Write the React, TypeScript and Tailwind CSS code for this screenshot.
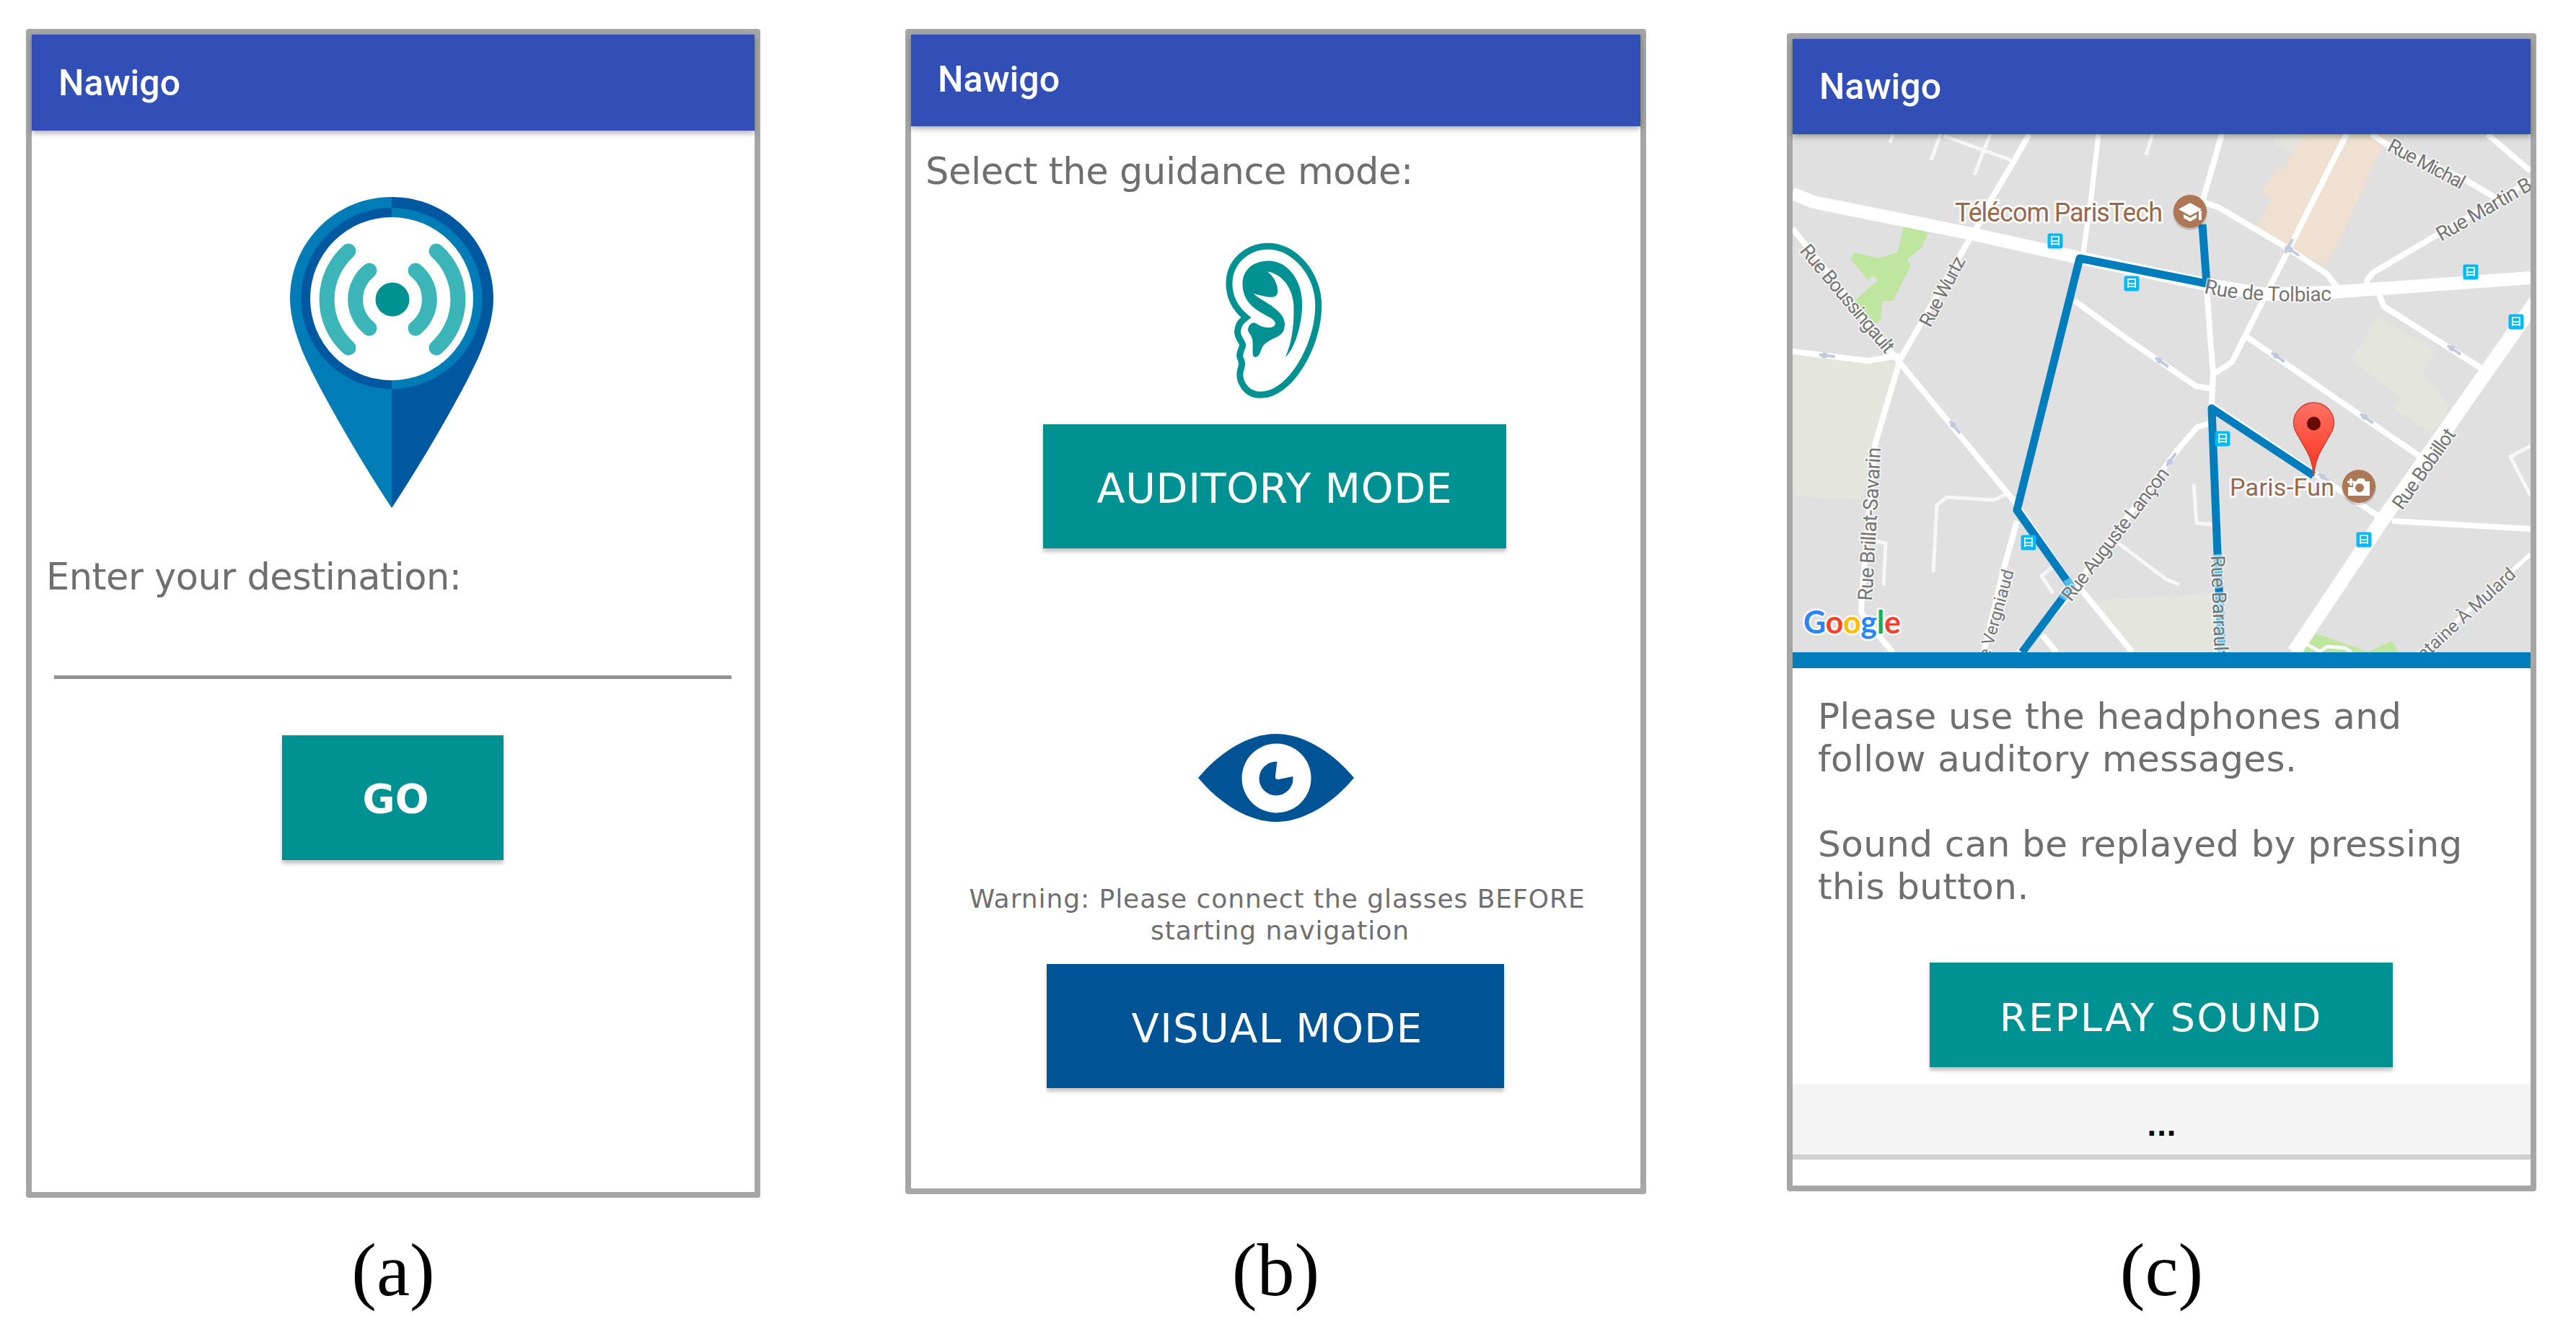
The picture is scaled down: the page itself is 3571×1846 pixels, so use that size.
import React, { ReactNode } from 'react';

interface PhoneProps {
    frameClass: string;
    headerClass: string;
    caption: string;
    captionClass: string;
    children: ReactNode;
}

const Phone: React.FC<PhoneProps> = ({ frameClass, headerClass, caption, captionClass, children }) => {
    return (
        <section className="flex flex-col items-center">
            <div className={`flex flex-col items-start border-8 border-[#a6a6a6] rounded-[4px] bg-white ${frameClass}`}>
                <header className={`relative z-10 flex items-center w-full shrink-0 bg-[#324fb8] text-white font-['Roboto',sans-serif] font-medium text-[50px] leading-none shadow-[0_3px_8px_rgba(0,0,0,0.35)] ${headerClass}`}>
                    Nawigo
                </header>
                {children}
            </div>
            <div className={`font-['Liberation_Serif',serif] text-black text-[104px] leading-[100px] ${captionClass}`}>
                {caption}
            </div>
        </section>
    );
};

interface ActionButtonProps {
    className: string;
    children: ReactNode;
}

const ActionButton: React.FC<ActionButtonProps> = ({ className, children }) => (
    <button className={`flex items-center justify-center shrink-0 text-white leading-none whitespace-nowrap shadow-[0_5px_5px_rgba(0,0,0,0.22)] ${className}`}>
        {children}
    </button>
);

const SoundPin = () => (
    <svg className="mt-[92px] ml-[357px] w-[284px] h-[431px] shrink-0" viewBox="0 0 284 431">
        <path d="M142 0C64 0 1 63 1 141C1 166 10 194 20 218C40 264 95 360 142 431Z" fill="#007cb7" />
        <path d="M142 0C220 0 283 63 283 141C283 166 274 194 264 218C244 264 189 360 142 431Z" fill="#0058a0" />
        <path d="M142 15A125 125 0 0 0 142 266Z" fill="#0058a0" />
        <path d="M142 15A125 125 0 0 1 142 266Z" fill="#007cb7" />
        <circle cx="142" cy="141" r="113" fill="#fff" />
        <circle cx="143" cy="142" r="23.5" fill="#009292" />
        <g fill="none" stroke="#3bb5b8" strokeWidth="21" strokeLinecap="round">
            <path d="M82 75A90 90 0 0 0 82 209" />
            <path d="M111 102A51 51 0 0 0 111 182" />
            <path d="M175 102A51 51 0 0 1 175 182" />
            <path d="M204 75A90 90 0 0 1 204 209" />
        </g>
    </svg>
);

const Ear = () => (
    <svg className="mt-[64px] ml-[432px] w-[141px] h-[224px] shrink-0" viewBox="0 0 205 440" preserveAspectRatio="none">
        <path
            d="M92 18C145 18 193 95 193 180C193 290 135 423 77 423C45 423 33 385 35 362C36 350 42 340 36 325C32 315 36 305 40 290C42 280 28 268 30 248C32 228 38 222 47 212C25 188 13 160 13 120C13 60 50 18 92 18Z"
            fill="none"
            stroke="#009292"
            strokeWidth="9"
            vectorEffect="non-scaling-stroke"
        />
        <path
            d="M40 120C40 85 60 58 92 58C135 58 162 120 160 180C160 230 145 300 126 320C140 280 144 230 143 180C141 130 120 95 90 87C106 104 113 130 110 147C107 160 96 160 62 147C75 166 125 190 125 230C125 270 100 262 83 287C75 300 76 320 66 320C57 320 62 295 60 275C58 255 50 255 51 243C53 230 61 222 68 229C80 242 106 245 106 228C106 205 40 200 40 120Z"
            fill="#009292"
        />
    </svg>
);

const Eye = () => (
    <svg className="mt-[257px] ml-[398px] w-[216px] h-[122px] shrink-0" viewBox="0 0 216 122">
        <path d="M0 61C30 25 70 0 108 0S186 25 216 61C186 97 146 122 108 122S30 97 0 61Z" fill="#005395" />
        <circle cx="108.500" cy="61.500" r="48" fill="#fff" />
        <circle cx="108" cy="62" r="23.500" fill="#005395" />
        <path d="M110 34L107 58Q106 64 112 63L136 58V34Z" fill="#fff" />
    </svg>
);

const busStops = [
    [364, 148], [470, 207], [940, 191], [1003, 260], [327, 566], [596, 422], [792, 562],
];

// x, y, angle
const oneWayMarks = [
    [48, 307, 6], [225, 406, 51], [512, 316, 36], [525, 451, -55], [673, 309, 36],
    [796, 394, 36], [917, 299, 34], [688, 155, -62], [693, 162, 34], [738, 477, 36],
];

const CityMap = () => (
    <svg className="w-[1023px] h-[718px] shrink-0 overflow-hidden bg-[#e0e0e0]" viewBox="0 0 1023 718">
        <defs>
            <linearGradient id="marker" x1="0" y1="0" x2="0" y2="1">
                <stop offset="0" stopColor="#ff7264" />
                <stop offset="0.8" stopColor="#fb3d2a" />
            </linearGradient>
            <path id="tolbiac" d="M570 220Q640 236 760 230" />
        </defs>

        {/* areas */}
        <g fill="#e4e5dd">
            <path d="M0 304L146 317L96 506L0 501Z" />
            <path d="M418 646L579 637L590 718H471Z" />
            <path d="M670 0H706L695 28L668 14Z" />
            <path d="M811 252L891 300L874 334L908 374V387L886 414L834 381L845 366L774 314Z" />
        </g>
        <path d="M706 0L682 49L673 45L650 81L663 90L641 136L738 182L759 146L825 0Z" fill="#efe0d1" />
        <g fill="#bfe69e">
            <path d="M154 127L188 136L180 156L159 174L164 182L139 231H124L122 257L116 263L86 231L118 202L112 196L104 202L80 172L86 164L120 172L145 164L149 151Z" />
            <path d="M725 692L798 717L831 702L840 718H707Z" />
        </g>

        {/* streets */}
        <g fill="none" stroke="#f7f7f7" strokeWidth="5" strokeLinejoin="round">
            <path d="M139 0L135 12M205 0L192 36M209 2L303 36M274 0L252 56M499 0L490 29" />
            <path d="M116 564L129 567L126 626" />
            <path d="M296 499L279 507L214 503L200 514L195 607" />
            <path d="M359 601L345 612L361 636" />
            <path d="M452 567L518 617L536 624" />
            <path d="M556 484L560 539L583 541" />
            <path d="M1023 432L995 447L1023 501" />
            <path d="M713 707L731 717L741 710L766 712L775 718" />
        </g>
        <g fill="none" stroke="#fff" strokeWidth="8" strokeLinejoin="round">
            <path d="M328 0L307 37L275 91L253 134L245 146L148 314" />
            <path d="M424 0L414 87L403 164" strokeWidth="7" />
            <path d="M0 131L148 316L309 511L386 624L400 631L471 718" />
            <path d="M0 301L104 314L148 307" />
            <path d="M148 316L114 431L96 640L95 661L100 672L139 718" />
            <path d="M311 536L293 601L265 718" />
            <path d="M346 694L366 718" />
            <path d="M581 400L561 406L535 436L379 644L314 718" />
            <path d="M391 231L464 284L559 349L581 353" />
            <path d="M595 0L568 94L590 101L688 159L741 194L754 211" />
            <path d="M768 0L688 159L625 284L609 316L586 331" />
            <path d="M574 211L579 284L583 331L581 377" />
            <path d="M802 0L824 14L934 64L974 88" />
            <path d="M963 0L1023 51" />
            <path d="M795 216L797 201L806 191L891 141L1023 64" />
            <path d="M813 222L820 239L959 327" />
            <path d="M627 279L873 449" />
            <path d="M581 375L722 469L816 532M831 536L1023 547" />
            <path d="M1023 582L873 718" strokeWidth="6" />
        </g>
        <g fill="none" stroke="#fff" strokeLinejoin="round">
            <path d="M0 82L29 94L253 139L396 171L573 208L656 222L745 219L816 214L1023 199" strokeWidth="18" />
            <path d="M1030 232L816 537L695 718" strokeWidth="20" />
        </g>
        {oneWayMarks.map(([x, y, angle], i) => (
            <g key={i} transform={`translate(${x} ${y}) rotate(${angle})`} fill="#c3c9df">
                <rect x="-11" y="-2" width="22" height="4" />
                <circle cx="-4" cy="0" r="4" />
            </g>
        ))}

        {/* route */}
        <g fill="none" stroke="#007dbc" strokeWidth="11" strokeLinejoin="round">
            <path d="M568 125L574 207L398 172L311 521L386 627L318 718" />
            <path d="M722 473L581 380L584 457L589 581L595 718" />
        </g>
        <g fill="none" stroke="#52bde3" strokeWidth="11">
            <path d="M380 617L386 627L374 644" />
            <path d="M589 582L591 628M592 638L595 718" />
        </g>

        {busStops.map(([x, y]) => (
            <g key={`${x}-${y}`} transform={`translate(${x} ${y})`}>
                <rect x="-10.500" y="-10.500" width="21" height="21" rx="3" fill="#00b9fa" />
                <path d="M-5 -6H5V4H-5ZM-5 4V6M5 4V6" fill="none" stroke="#d8f4ff" strokeWidth="2" />
                <path d="M-4 0H4" stroke="#d8f4ff" strokeWidth="2" />
            </g>
        ))}

        {/* street names */}
        <g
            className="font-['Roboto',sans-serif]"
            fontSize="27"
            fill="#757575"
            stroke="#fff"
            strokeOpacity="0.6"
            strokeWidth="4"
            strokeLinejoin="round"
            style={{ paintOrder: 'stroke' }}
        >
            <text transform="translate(9 162) rotate(50)" textLength="187">Rue Boussingault</text>
            <text transform="translate(191 269) rotate(-62.4)" textLength="106">Rue Wurtz</text>
            <text transform="translate(823 22) rotate(27.900)" textLength="117">Rue Michal</text>
            <text transform="translate(899 149) rotate(-29.800)" textLength="148" fontSize="28">Rue Martin B</text>
            <text fontSize="28"><textPath href="#tolbiac" textLength="178">Rue de Tolbiac</textPath></text>
            <text transform="translate(110 647) rotate(-86.700)" textLength="213" fontSize="28">Rue Brillat-Savarin</text>
            <text transform="translate(386 649) rotate(-52.400)" textLength="225">Rue Auguste Lançon</text>
            <text transform="translate(307 606) rotate(-74.300)" textAnchor="end" fontSize="24">e Vergniaud</text>
            <text transform="translate(845 522) rotate(-54.700)" textLength="130">Rue Bobillot</text>
            <text transform="translate(1004 612) rotate(-42.400)" textAnchor="end" fontSize="25">ntaine À Mulard</text>
            <text transform="translate(580 584) rotate(88)" textLength="141">Rue Barrault</text>
        </g>

        {/* places */}
        <g
            className="font-['Roboto',sans-serif]"
            fill="#97684c"
            stroke="#fff"
            strokeOpacity="0.85"
            strokeWidth="6"
            strokeLinejoin="round"
            style={{ paintOrder: 'stroke' }}
        >
            <text x="225" y="121" fontSize="36" textLength="288">Télécom ParisTech</text>
            <text x="606" y="501" fontSize="34" textLength="145">Paris-Fun</text>
        </g>
        <g transform="translate(551 107)">
            <circle cy="2" r="24" fill="#000" opacity="0.15" />
            <circle r="23" fill="#ad7654" />
            <path d="M-16 -3L0 -12L16 -3L0 6ZM-9 4L0 9L9 4V9L0 14L-9 9ZM12 -1H16V12H12Z" fill="#fff" />
        </g>
        <g transform="translate(785 488)">
            <circle cy="2" r="24" fill="#000" opacity="0.15" />
            <circle r="23" fill="#ad7654" />
            <path d="M-4 -7L-1 -11H7L9 -7H15V13H-15V1H-8V-7Z" fill="#fff" />
            <circle cx="1" cy="2" r="6" fill="#ad7654" />
            <path d="M-11 -11V-1M-16 -6H-6" stroke="#fff" strokeWidth="3" />
        </g>
        <path
            d="M722.5 474C720 445 711 437 702 420C696 410 694.5 406 694.5 400A28 28 0 0 1 750.500 400C750.500 406 749 410 743 420C734 437 725 445 722.5 474Z"
            fill="url(#marker)"
            stroke="#c8453b"
            strokeWidth="1.500"
        />
        <circle cx="722.500" cy="401" r="9.500" fill="#660b04" />

        <text
            x="15"
            y="692"
            className="font-['Lato',sans-serif]"
            fontSize="43"
            fontWeight="700"
            textLength="135"
            stroke="#fff"
            strokeWidth="5"
            strokeLinejoin="round"
            style={{ paintOrder: 'stroke' }}
        >
            <tspan fill="#2a86f7">G</tspan>
            <tspan fill="#f4402f">o</tspan>
            <tspan fill="#fdbd00">o</tspan>
            <tspan fill="#2a86f7">g</tspan>
            <tspan fill="#10b05f">l</tspan>
            <tspan fill="#f4402f">e</tspan>
        </text>
    </svg>
);

export default function App() {
    return (
        <main className="flex items-start w-[3571px] h-[1846px] pl-[36px] overflow-hidden bg-white font-['DejaVu_Sans',sans-serif] text-[#6f6f6f]">
            <Phone frameClass="mt-[40px] w-[1018px] h-[1620px]" headerClass="h-[133px] pl-[37px]" caption="(a)" captionClass="mt-[50px]">
                <SoundPin />
                <label className="mt-[66px] ml-[20px] text-[51px] leading-[60px] tracking-[-0.5px] whitespace-nowrap">
                    Enter your destination:
                </label>
                <div className="mt-[106px] ml-[31px] w-[939px] h-[5px] shrink-0 bg-[#929292]" />
                <ActionButton className="mt-[78px] ml-[347px] w-[307px] h-[173px] pl-[8px] pt-[3px] bg-[#009292] font-bold text-[55px]">
                    GO
                </ActionButton>
            </Phone>

            <Phone frameClass="mt-[40px] ml-[201px] w-[1027px] h-[1615px]" headerClass="h-[127px] pl-[37px] pb-[3px]" caption="(b)" captionClass="mt-[55px] ml-[201px]">
                <p className="mt-[33px] ml-[20px] text-[51px] leading-[60px] tracking-[-0.4px] whitespace-nowrap">
                    Select the guidance mode:
                </p>
                <Ear />
                <ActionButton className="mt-[32px] ml-[183px] w-[642px] h-[172px] pt-[7px] bg-[#009292] text-[57px] tracking-[0.700px]">
                    AUDITORY MODE
                </ActionButton>
                <Eye />
                <p className="mt-[85px] w-full pl-[4px] text-center text-[36px] leading-[44px] tracking-[0.950px] whitespace-nowrap">
                    Warning: Please connect the glasses BEFORE<br />
                    <span className="pl-[8px]">starting navigation</span>
                </p>
                <ActionButton className="mt-[24px] ml-[188px] w-[634px] h-[172px] pt-[5px] pl-[5px] bg-[#005395] text-[56px] tracking-[1.300px]">
                    VISUAL MODE
                </ActionButton>
            </Phone>

            <Phone frameClass="mt-[46px] ml-[195px] w-[1039px] h-[1605px]" headerClass="h-[132px] pl-[37px]" caption="(c)" captionClass="mt-[59px] ml-[195px]">
                <CityMap />
                <div className="w-full h-[22px] shrink-0 bg-[#007dbc]" />
                <div className="flex flex-col gap-[59px] mt-[38px] ml-[35px] text-[50px] leading-[59px] tracking-[0.400px] whitespace-nowrap">
                    <p>Please use the headphones and<br />follow auditory messages.</p>
                    <p>Sound can be replayed by pressing<br />this button.</p>
                </div>
                <ActionButton className="mt-[75px] ml-[190px] w-[642px] h-[145px] pt-[8px] bg-[#009292] text-[54px] tracking-[2.600px]">
                    REPLAY SOUND
                </ActionButton>
                <div className="flex items-center justify-center mt-[23px] w-full h-[98px] shrink-0 pt-[22px] bg-[#f4f4f4] text-black text-[36px] leading-none font-bold shadow-[0_7px_0_#cfcfcf]">
                    ...
                </div>
            </Phone>
        </main>
    );
}
